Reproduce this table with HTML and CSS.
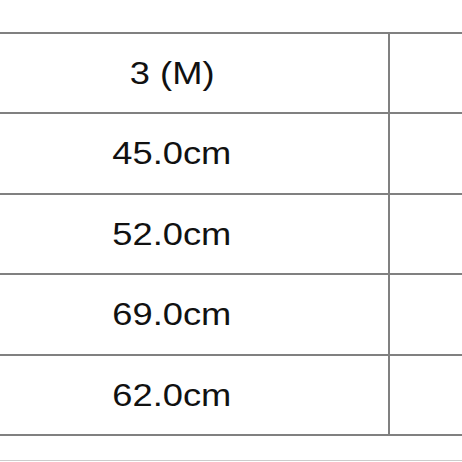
FILE: index.html
```html
<!DOCTYPE html>
<html lang="ko">
<head>
<meta charset="utf-8">
<title>Size table</title>
<link rel="stylesheet" href="styles.css">
</head>
<body>
<div class="page">
  <div class="size-table">
    <div class="cell"><span class="txt">3 (M)</span></div>
    <div class="cell"></div>
    <div class="cell"><span class="txt">45.0cm</span></div>
    <div class="cell"></div>
    <div class="cell"><span class="txt">52.0cm</span></div>
    <div class="cell"></div>
    <div class="cell"><span class="txt">69.0cm</span></div>
    <div class="cell"></div>
    <div class="cell"><span class="txt">62.0cm</span></div>
    <div class="cell"></div>
  </div>
  <div class="next-rule"></div>
</div>
</body>
</html>
```
FILE: styles.css
```css
html, body {
  margin: 0;
  padding: 0;
  background: #ffffff;
  overflow: hidden;
}
.page {
  width: 462px;
  height: 462px;
  overflow: hidden;
  padding-top: 32px;
  box-sizing: border-box;
}
.size-table {
  display: grid;
  grid-template-columns: 432px 100px;
  grid-template-rows: 78px 79px 78px 79px 78px;
  gap: 2px;
  padding: 2px 0;
  background: #808080;
  width: 534px;
  margin-left: -44px;
}
.cell {
  background: #ffffff;
  display: flex;
  align-items: center;
  justify-content: center;
}
.txt {
  display: inline-block;
  font-family: "Liberation Sans", Arial, sans-serif;
  font-size: 31px;
  color: #111111;
  transform: scaleX(1.17);
  line-height: 1;
}
.next-rule {
  margin-top: 24px;
  border-top: 1px solid #cccccc;
}
```
